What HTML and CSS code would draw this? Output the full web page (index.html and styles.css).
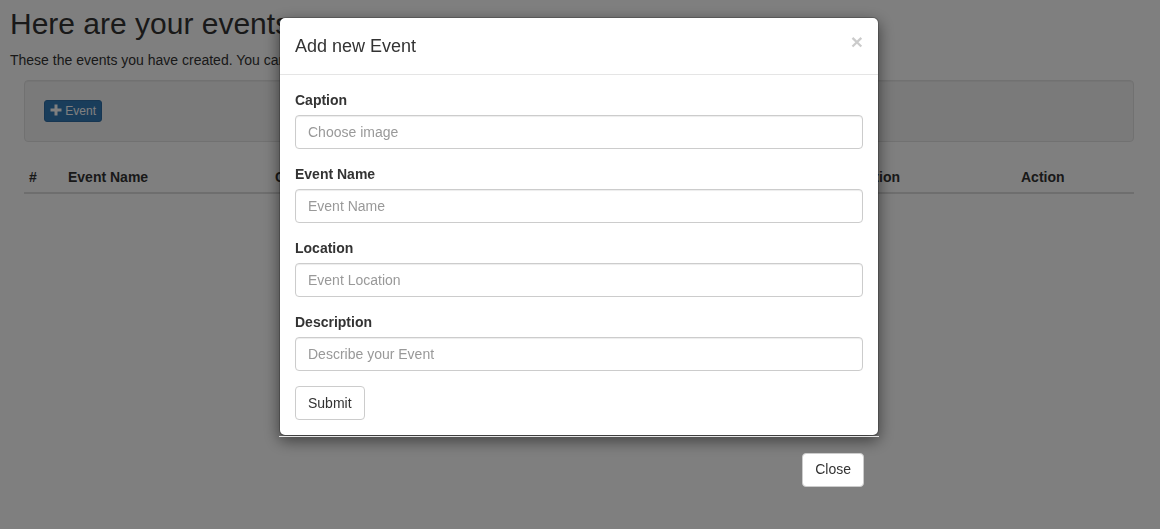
FILE: index.html
```html
<!DOCTYPE html>
<html lang="en">
<head>
<meta charset="utf-8">
<title>Events</title>
<link rel="stylesheet" href="styles.css">
</head>
<body>
<div class="page">
  <h2 class="page-title">Here are your events</h2>
  <p class="intro">These the events you have created. You can</p>
  <div class="section">
    <div class="well">
      <button class="btn btn-primary btn-xs" type="button"><svg class="glyph-plus" width="12" height="12" viewBox="0 0 12 12" aria-hidden="true"><path d="M4.5 0.5h3v4h4v3h-4v4h-3v-4h-4v-3h4z" fill="currentColor"/></svg> Event</button>
    </div>
    <table class="events">
      <colgroup>
        <col class="c-num"><col class="c-name"><col class="c-cap"><col class="c-loc"><col class="c-desc"><col class="c-act">
      </colgroup>
      <thead>
        <tr><th>#</th><th>Event Name</th><th>Caption</th><th>Location</th><th>Description</th><th>Action</th></tr>
      </thead>
      <tbody></tbody>
    </table>
  </div>
</div>

<div class="backdrop"></div>

<div class="modal">
  <div class="dialog">
    <div class="modal-content">
      <div class="modal-header">
        <button class="close" type="button">&times;</button>
        <h4 class="modal-title">Add new Event</h4>
      </div>
      <div class="modal-body">
        <form class="event-form">
          <div class="form-group">
            <label>Caption</label>
            <input class="form-control" type="text" placeholder="Choose image">
          </div>
          <div class="form-group">
            <label>Event Name</label>
            <input class="form-control" type="text" placeholder="Event Name">
          </div>
          <div class="form-group">
            <label>Location</label>
            <input class="form-control" type="text" placeholder="Event Location">
          </div>
          <div class="form-group">
            <label>Description</label>
            <input class="form-control" type="text" placeholder="Describe your Event">
          </div>
          <button class="btn btn-default btn-submit" type="button">Submit</button>
        </form>
      </div>
    </div>
    <div class="modal-footer">
      <button class="btn btn-default" type="button">Close</button>
    </div>
  </div>
</div>
</body>
</html>
```

FILE: styles.css
```css
* { box-sizing: border-box; }

html, body {
  margin: 0;
  height: 100%;
}

body {
  font-family: "Liberation Sans", Arial, sans-serif;
  font-size: 14px;
  line-height: 1.42857;
  color: #333;
  background: #fff;
  overflow: hidden;
}

.page {
  padding: 0 10px;
}

.page-title {
  font-size: 30px;
  font-weight: 500;
  line-height: 1.1;
  margin: 6px 0 10px;
  padding-top: 1px;
}

.intro {
  margin: 0 0 9px;
  padding-top: 1px;
  white-space: nowrap;
}

.section {
  padding: 0 16px 0 14px;
}

.well {
  min-height: 20px;
  padding: 19px;
  margin-bottom: 20px;
  background: #f5f5f5;
  border: 1px solid #e3e3e3;
  border-radius: 4px;
  box-shadow: inset 0 1px 1px rgba(0, 0, 0, .05);
}

.btn {
  display: inline-block;
  font-family: inherit;
  font-size: 14px;
  line-height: 1.42857;
  padding: 6px 12px;
  border: 1px solid transparent;
  border-radius: 4px;
  cursor: pointer;
  white-space: nowrap;
  vertical-align: middle;
}

.btn-xs {
  padding: 1px 5px;
  font-size: 12px;
  line-height: 1.5;
  border-radius: 3px;
}

.btn-primary {
  color: #fff;
  background: #337ab7;
  border-color: #2e6da4;
}

.btn-default {
  color: #333;
  background: #fff;
  border-color: #ccc;
}

.btn-submit {
  padding: 7px 12px 5px;
}

.glyph-plus {
  display: inline-block;
  vertical-align: -1px;
}

.events {
  width: 100%;
  border-collapse: collapse;
  border-spacing: 0;
  table-layout: fixed;
}

.c-num { width: 39px; }
.c-name { width: 207px; }
.c-cap { width: 274px; }
.c-loc { width: 274px; }
.c-desc { width: 198px; }
.c-act { width: 118px; }

.events th {
  text-align: left;
  font-weight: bold;
  padding: 6px 5px 4px;
  line-height: 1.42857;
  vertical-align: bottom;
  border-bottom: 2px solid #ddd;
  white-space: nowrap;
}

.backdrop {
  position: fixed;
  inset: 0;
  background: #000;
  opacity: .5;
  z-index: 1040;
}

.modal {
  position: fixed;
  inset: 0;
  z-index: 1050;
}

.dialog {
  width: 600px;
  margin: 17px 0 0 279px;
}

.modal-content {
  background: #fff;
  border: 1px solid rgba(0, 0, 0, .2);
  border-radius: 6px;
  box-shadow: 0 5px 15px rgba(0, 0, 0, .5);
  background-clip: padding-box;
}

.modal-header {
  padding: 16px 15px 14px;
  border-bottom: 1px solid #e5e5e5;
}

.modal-title {
  margin: 0;
  font-size: 18px;
  font-weight: 500;
  line-height: 1.42857;
}

.close {
  float: right;
  margin-top: -3px;
  padding: 0;
  border: 0;
  background: transparent;
  font-family: inherit;
  font-size: 21px;
  font-weight: bold;
  line-height: 1;
  color: #000;
  opacity: .2;
  text-shadow: 0 1px 0 #fff;
  cursor: pointer;
}

.modal-body {
  padding: 15px;
}

.event-form {
  margin: 0;
}

.form-group {
  margin-bottom: 15px;
}

.form-group label {
  display: block;
  font-weight: bold;
  padding-top: 1px;
  margin-bottom: 4px;
}

.form-control {
  display: block;
  width: 100%;
  height: 34px;
  padding: 6px 12px;
  font-family: inherit;
  font-size: 14px;
  line-height: 1.42857;
  color: #555;
  background: #fff;
  border: 1px solid #ccc;
  border-radius: 4px;
  box-shadow: inset 0 1px 1px rgba(0, 0, 0, .075);
}

.form-control::placeholder {
  color: #999;
  opacity: 1;
}

.modal-footer {
  padding: 16px 15px 15px;
  text-align: right;
  border-top: 1px solid #e5e5e5;
}
```
